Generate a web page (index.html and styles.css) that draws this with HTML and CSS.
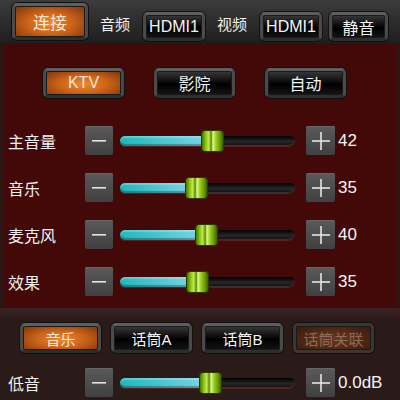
FILE: index.html
```html
<!DOCTYPE html>
<html lang="zh">
<head>
    <meta charset="UTF-8">
    <title>KTV</title>
    <link rel="stylesheet" href="styles.css">
</head>
<body>
    <main class="app">
        <div class="topbar">
            <button class="btn orange connect">连接</button>
            <span class="tlabel first">音频</span>
            <button class="btn black small">HDMI1</button>
            <span class="tlabel">视频</span>
            <button class="btn black small">HDMI1</button>
            <button class="btn black small mute">静音</button>
        </div>

        <div class="panel">
            <div class="modes">
                <button class="btn orange mode">KTV</button>
                <button class="btn black mode">影院</button>
                <button class="btn black mode">自动</button>
            </div>

            <div class="row">
                <span class="label">主音量</span>
                <div class="step"><svg width="14" height="4"><rect x="0" y="1" width="14" height="1.6" fill="#e4e4e4"/></svg></div>
                <div class="track"><div class="fill" style="width: 88px"></div><div class="thumb" style="left: 82px"></div></div>
                <div class="step plus"><svg width="18" height="18"><rect x="8.2" y="0" width="1.6" height="18" fill="#e4e4e4"/><rect x="0" y="8.2" width="18" height="1.6" fill="#e4e4e4"/></svg></div>
                <span class="value">42</span>
            </div>
            <div class="row">
                <span class="label">音乐</span>
                <div class="step"><svg width="14" height="4"><rect x="0" y="1" width="14" height="1.6" fill="#e4e4e4"/></svg></div>
                <div class="track"><div class="fill" style="width: 72px"></div><div class="thumb" style="left: 66px"></div></div>
                <div class="step plus"><svg width="18" height="18"><rect x="8.2" y="0" width="1.6" height="18" fill="#e4e4e4"/><rect x="0" y="8.2" width="18" height="1.6" fill="#e4e4e4"/></svg></div>
                <span class="value">35</span>
            </div>
            <div class="row">
                <span class="label">麦克风</span>
                <div class="step"><svg width="14" height="4"><rect x="0" y="1" width="14" height="1.6" fill="#e4e4e4"/></svg></div>
                <div class="track"><div class="fill" style="width: 82px"></div><div class="thumb" style="left: 76px"></div></div>
                <div class="step plus"><svg width="18" height="18"><rect x="8.2" y="0" width="1.6" height="18" fill="#e4e4e4"/><rect x="0" y="8.2" width="18" height="1.6" fill="#e4e4e4"/></svg></div>
                <span class="value">40</span>
            </div>
            <div class="row">
                <span class="label">效果</span>
                <div class="step"><svg width="14" height="4"><rect x="0" y="1" width="14" height="1.6" fill="#e4e4e4"/></svg></div>
                <div class="track"><div class="fill" style="width: 73px"></div><div class="thumb" style="left: 67px"></div></div>
                <div class="step plus"><svg width="18" height="18"><rect x="8.2" y="0" width="1.6" height="18" fill="#e4e4e4"/><rect x="0" y="8.2" width="18" height="1.6" fill="#e4e4e4"/></svg></div>
                <span class="value">35</span>
            </div>
        </div>

        <div class="bottom">
            <div class="tabs">
                <button class="btn orange tab">音乐</button>
                <button class="btn black tab">话筒A</button>
                <button class="btn black tab">话筒B</button>
                <button class="btn dim tab">话筒关联</button>
            </div>
            <div class="row">
                <span class="label">低音</span>
                <div class="step"><svg width="14" height="4"><rect x="0" y="1" width="14" height="1.6" fill="#e4e4e4"/></svg></div>
                <div class="track"><div class="fill" style="width: 86px"></div><div class="thumb" style="left: 80px"></div></div>
                <div class="step plus"><svg width="18" height="18"><rect x="8.2" y="0" width="1.6" height="18" fill="#e4e4e4"/><rect x="0" y="8.2" width="18" height="1.6" fill="#e4e4e4"/></svg></div>
                <span class="value">0.0dB</span>
            </div>
        </div>
    </main>
</body>
</html>
```

FILE: styles.css
```css
html, body {
    margin: 0;
    padding: 0;
    background: #2a1b19;
}

.app {
    width: 400px;
    height: 400px;
    overflow: hidden;
    font-family: "Liberation Sans", "Noto Sans CJK SC", sans-serif;
    color: #f2f2f2;
}

/* buttons */
.btn {
    box-sizing: border-box;
    display: flex;
    align-items: center;
    justify-content: center;
    padding: 0;
    border: 3px solid #4a4a4a;
    border-top-color: #5e5e5e;
    border-bottom-color: #2e2e2e;
    border-radius: 5px;
    font-family: "Liberation Sans", "Noto Sans CJK SC", sans-serif;
    color: #f4f4f4;
    box-shadow: 0 0 0 1px #111, inset 0 0 0 1px #1a1a1a;
}

.btn.black {
    background: linear-gradient(#3a3a3a, #0c0c0c 45%, #000 55%, #151515);
}

.btn.orange {
    background: radial-gradient(ellipse at 50% 55%, #ec8a30 0%, #cc641a 45%, #7a3208 100%);
    color: #fbe6d4;
}

.btn.dim {
    background: radial-gradient(ellipse at 50% 55%, #6a3a1e 0%, #4e2814 55%, #33190c 100%);
    border-color: #3e3430;
    color: #8e6a58;
}

/* top bar */
.topbar {
    display: flex;
    align-items: center;
    height: 43px;
    padding-left: 12px;
    background: linear-gradient(#3c3c3c, #2a2a2a 60%, #1e1e1e);
    box-sizing: border-box;
}

.connect {
    width: 76px;
    height: 37px;
    font-size: 17px;
}

.tlabel {
    font-size: 15px;
    width: 30px;
    margin: 4px 13px 0 12px;
    color: #eee;
}

.small {
    width: 62px;
    height: 29px;
    margin-top: 10px;
    font-size: 16px;
}

.mute {
    width: 59px;
    margin-left: 7px;
}

/* maroon panel */
.panel {
    height: 265px;
    background: #430909;
    border-left: 3px solid #2c1614;
    border-right: 3px solid #2c1614;
    padding-top: 25px;
    box-sizing: border-box;
}

.modes {
    display: flex;
    padding-left: 40px;
    gap: 30px;
    margin-bottom: 19px;
}

.mode {
    width: 81px;
    height: 30px;
    font-size: 16px;
}

/* slider rows */
.row {
    display: flex;
    align-items: center;
    height: 47px;
    padding-left: 5px;
}

.bottom .row {
    padding-left: 8px;
}

.label {
    width: 77px;
    font-size: 16px;
    color: #f0f0f0;
}

.step {
    width: 28px;
    height: 29px;
    display: flex;
    align-items: center;
    justify-content: center;
    background: linear-gradient(#5a5a5a, #404040);
    border-radius: 2px;
    box-shadow: inset 0 1px 0 #666;
}

.step.plus {
    width: 29px;
    margin-left: 11px;
}

.track {
    position: relative;
    width: 175px;
    height: 10px;
    margin-left: 7px;
    border-radius: 5px 7px 9px 5px / 5px 4px 8px 5px;
    background: linear-gradient(#000, #262626 55%, #0e0e0e);
    box-shadow: 0 1px 0 #5a2020, inset 0 -1px 0 #333;
}

.fill {
    height: 100%;
    border-radius: 5px 0 0 5px;
    background: linear-gradient(90deg, #1fb8bc, #7ad4e4);
    box-shadow: inset 0 2px 1px rgba(255, 255, 255, 0.25), inset 0 -2px 1px rgba(0, 0, 0, 0.3);
}

.thumb {
    position: absolute;
    top: -5px;
    width: 21px;
    height: 20px;
    border-radius: 3px;
    background: linear-gradient(90deg, #4a7400, #8cc414 18%, #c0ea50 32%, #5a8a00 44%, #e0f890 52%, #9ad020 66%, #6a9a06 85%, #3e6000);
    box-shadow: 0 0 0 1px #2a3a00;
}

.value {
    margin-left: 3px;
    font-size: 17px;
    color: #f4f4f4;
}

/* bottom section */
.bottom {
    padding-top: 15px;
    background: linear-gradient(#3a2422, #2a1b19 12px);
}

.tabs {
    display: flex;
    padding-left: 20px;
    gap: 10px;
    margin-bottom: 6px;
}

.tab {
    width: 81px;
    height: 30px;
    font-size: 15px;
}
```
